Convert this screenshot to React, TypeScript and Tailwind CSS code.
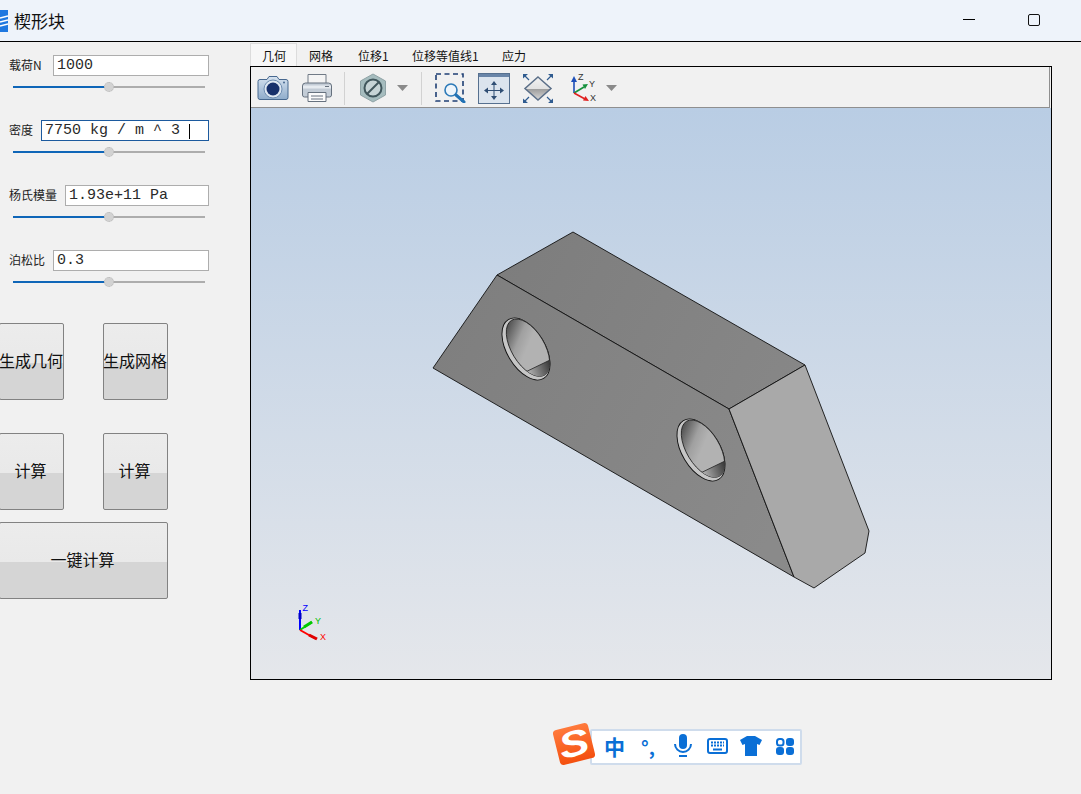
const labelFont = "font-['Noto_Sans_CJK_SC','Liberation_Sans',sans-serif]"

const fields = [
  { label: '载荷N', value: '1000', inputWidth: 'w-[156px]' },
  { label: '密度', value: '7750 kg / m ^ 3 ', inputWidth: 'w-[168px]', focused: true },
  { label: '杨氏模量', value: '1.93e+11 Pa', inputWidth: 'w-[144px]' },
  { label: '泊松比', value: '0.3', inputWidth: 'w-[156px]' },
]

const tabs = [
  { label: '几何', className: 'w-[47px] pl-[11px] bg-[#f7f7f7] border border-b-0 border-[#dcdcdc]' },
  { label: '网格', className: 'w-[49px] pl-[12px]' },
  { label: '位移1', className: 'w-[53px] pl-[12px]' },
  { label: '位移等值线1', className: 'w-[91px] pl-[13px]' },
  { label: '应力', className: 'w-[50px] pl-[12px]' },
]

function Field({ label, value, inputWidth, focused }: { label: string; value: string; inputWidth: string; focused?: boolean }) {
  return (
    <div className="mb-[27px]">
      <div className="flex h-[21px] items-center justify-between pl-[9px] pr-[41px]">
        <span className={`${labelFont} pb-[2px] text-[12px] text-[#222]`}>{label}</span>
        <div
          className={`flex h-[21px] ${inputWidth} items-center border ${focused ? 'border-[#1c5a9e]' : 'border-[#adadad]'} bg-white pl-[3px] pt-[2px] font-['Liberation_Mono',monospace] text-[15px] text-[#2a2a2a]`}
        >
          <span className="whitespace-pre">{value}</span>
          {focused && <span className="h-[15px] w-px bg-black" />}
        </div>
      </div>
      <div className="relative ml-[13px] mt-[5px] flex h-[12px] w-[192px] items-center">
        <div className="h-[2px] w-[96px] bg-[#0f66b8]" />
        <div className="h-[2px] w-[96px] bg-[#adadad]" />
        <div className="absolute left-[91px] top-[1px] h-[10px] w-[10px] rounded-full border border-dotted border-[#b8b8b8] bg-[#d2d2d2]" />
      </div>
    </div>
  )
}

function ActionButton({ label, width }: { label: string; width: string }) {
  return (
    <button
      className={`${width} ${labelFont} h-[77px] rounded-[2px] border border-[#828282] bg-[linear-gradient(#ececec_0,#e9e9e9_52%,#d5d5d5_52%,#d5d5d5_100%)] pb-[3px] pr-px text-[16px] leading-none whitespace-nowrap text-[#111]`}
    >
      <span className="-ml-px">{label}</span>
    </button>
  )
}

function CameraIcon() {
  return (
    <svg width="32" height="28" viewBox="0 0 32 28">
      <defs>
        <linearGradient id="camBody" x1="0" y1="0" x2="0" y2="1">
          <stop offset="0" stopColor="#d6e2ef" />
          <stop offset="1" stopColor="#8faccb" />
        </linearGradient>
      </defs>
      <path d="M1 7.5a2 2 0 0 1 2-2h7l2-3h8l2 3h7a2 2 0 0 1 2 2v16a2 2 0 0 1-2 2H3a2 2 0 0 1-2-2z" fill="url(#camBody)" stroke="#47688f" />
      <circle cx="16" cy="15" r="9" fill="#dfe8f2" stroke="#6f8db0" />
      <circle cx="16" cy="15" r="6.5" fill="#17306b" />
      <circle cx="27" cy="8.5" r="1" fill="#47688f" />
    </svg>
  )
}

function PrinterIcon() {
  return (
    <svg width="32" height="30" viewBox="0 0 32 30">
      <path d="M7 1.5h18v9H7z" fill="#f4f4f4" stroke="#707a86" />
      <path d="M1.5 13a3 3 0 0 1 3-3h23a3 3 0 0 1 3 3v9a2 2 0 0 1-2 2h-25a2 2 0 0 1-2-2z" fill="#c3ccd6" stroke="#66717e" />
      <path d="M2 12.5h28v3H2z" fill="#e6ebf0" />
      <path d="M7 19.5h18v9H7z" fill="#fbfbfb" stroke="#66717e" />
      <path d="M10 23h12M10 26h12" stroke="#66717e" />
      <path d="M24 13.5h4" stroke="#66717e" />
    </svg>
  )
}

function HexIcon() {
  return (
    <svg width="28" height="30" viewBox="0 0 28 30">
      <path d="M14 1l12.5 7v14L14 29 1.5 22V8z" fill="#a5bcbe" stroke="#8fa3a6" />
      <circle cx="14" cy="15" r="8.5" fill="#c6d4d6" stroke="#40565c" strokeWidth="2" />
      <path d="M8 21L20 9" stroke="#40565c" strokeWidth="2" />
    </svg>
  )
}

function Caret() {
  return (
    <svg width="11" height="6" viewBox="0 0 11 6">
      <path d="M0 0h11L5.5 6z" fill="#8a8a8a" />
    </svg>
  )
}

function ZoomBoxIcon() {
  return (
    <svg width="31" height="30" viewBox="0 0 31 30">
      <rect x="1" y="1" width="27" height="27" fill="none" stroke="#1f3f74" strokeWidth="1.6" strokeDasharray="5 3.5" />
      <circle cx="16" cy="17" r="6" fill="#eef5fb" stroke="#2d7ab8" strokeWidth="1.6" />
      <path d="M21 22l8 7" stroke="#2272b4" strokeWidth="3" strokeLinecap="round" />
    </svg>
  )
}

function FitWindowIcon() {
  return (
    <svg width="32" height="31" viewBox="0 0 32 31">
      <rect x="0.5" y="0.5" width="31" height="30" fill="#dbe4ee" stroke="#56708f" />
      <rect x="1" y="1" width="30" height="3" fill="#6985a8" />
      <path d="M16 8l3 4h-6zM16 27l3-4h-6zM6 17.500l4-3v6zM26 17.500l-4-3v6z" fill="#2f4e74" />
      <path d="M16 12v11M10 17.500h12" stroke="#2f4e74" />
    </svg>
  )
}

function DiamondIcon() {
  return (
    <svg width="32" height="31" viewBox="0 0 32 31">
      <defs>
        <linearGradient id="diamondFill" x1="0" y1="0" x2="0" y2="1">
          <stop offset="0" stopColor="#f2f2f2" />
          <stop offset="0.5" stopColor="#e2e2e2" />
          <stop offset="0.5" stopColor="#9a9a9a" />
          <stop offset="1" stopColor="#d8d8d8" />
        </linearGradient>
      </defs>
      <path d="M16 4l13 11.500L16 27 3 15.500z" fill="url(#diamondFill)" stroke="#5b6f88" strokeWidth="1.500" />
      <path d="M1 1h5L1 5.500zM31 1h-5l5 4.500zM1 30h5l-5-4.500zM31 30h-5l5-4.500z" fill="#2f5b8f" />
      <path d="M3 3l4 4M29 3l-4 4M3 28l4-4M29 28l-4-4" stroke="#2f5b8f" strokeWidth="1.200" />
    </svg>
  )
}

function AxesIcon() {
  return (
    <svg width="28" height="30" viewBox="0 0 28 30">
      <path d="M4 20V8" stroke="#1d4fb8" strokeWidth="1.600" />
      <path d="M4 3l3 6H1z" fill="#1d4fb8" />
      <path d="M4 20l10-6" stroke="#16913c" strokeWidth="1.600" />
      <path d="M18 11l-5.500 0.500 2.500 4.500z" fill="#16913c" />
      <path d="M4 20l11 6" stroke="#e02020" strokeWidth="1.600" />
      <path d="M19 28l-6-0.500 2.500-4.500z" fill="#e02020" />
      <text x="8" y="7" fontSize="9" fontFamily="Liberation Sans" fill="#333">Z</text>
      <text x="19" y="14" fontSize="9" fontFamily="Liberation Sans" fill="#333">Y</text>
      <text x="20" y="28" fontSize="9" fontFamily="Liberation Sans" fill="#333">X</text>
    </svg>
  )
}

function Hole({ dx, dy, id }: { dx: number; dy: number; id: string }) {
  return (
    <g transform={`translate(${dx} ${dy})`}>
      <clipPath id={id}>
        <ellipse cx="528" cy="347.700" rx="16.500" ry="32" transform="rotate(-31 528 347.700)" />
      </clipPath>
      <ellipse cx="526" cy="349" rx="19" ry="34.300" transform="rotate(-31 526 349)" fill="#c6c6c6" stroke="#111" strokeWidth="0.900" />
      <ellipse cx="528" cy="347.700" rx="16.500" ry="32" transform="rotate(-31 528 347.700)" fill="url(#boreFill)" stroke="#222" strokeWidth="0.800" />
      <g clipPath={`url(#${id})`}>
        <path d="M526.500 371.500L551 359.500V385H520z" fill="url(#boreLow)" />
        <path d="M526.500 371.500L551 359.500" stroke="#222" strokeWidth="0.800" fill="none" />
      </g>
    </g>
  )
}

function Model() {
  return (
    <svg className="block h-[571px] w-[800px]" viewBox="251 108 800 571">
      <defs>
        <linearGradient id="topFace" gradientUnits="userSpaceOnUse" x1="500" y1="250" x2="800" y2="400">
          <stop offset="0" stopColor="#7d7d7d" />
          <stop offset="1" stopColor="#878787" />
        </linearGradient>
        <linearGradient id="frontFace" gradientUnits="userSpaceOnUse" x1="440" y1="340" x2="780" y2="520">
          <stop offset="0" stopColor="#7f7f7f" />
          <stop offset="1" stopColor="#8a8a8a" />
        </linearGradient>
        <linearGradient id="boreFill" gradientUnits="userSpaceOnUse" x1="512" y1="325" x2="528" y2="347">
          <stop offset="0" stopColor="#505050" />
          <stop offset="0.6" stopColor="#a0a0a0" />
          <stop offset="1" stopColor="#b2b2b2" />
        </linearGradient>
        <linearGradient id="boreLow" gradientUnits="userSpaceOnUse" x1="530" y1="372" x2="550" y2="365">
          <stop offset="0" stopColor="#a8a8a8" />
          <stop offset="1" stopColor="#3c3c3c" />
        </linearGradient>
      </defs>
      <g stroke="#111" strokeWidth="0.900" strokeLinejoin="round">
        <path d="M497 275L573 232L805 365L729 409Z" fill="url(#topFace)" />
        <path d="M497 275L729 409L794 577L433 368Z" fill="url(#frontFace)" />
        <path d="M805 365L869 531L865 553L814 588L794 577L729 409Z" fill="#a9a9a9" />
      </g>
      <Hole dx={0} dy={0} id="holeA" />
      <Hole dx={175} dy={101} id="holeB" />
      <path d="M300 630V610" stroke="#0000ff" strokeWidth="2" />
      <path d="M300 619V613" stroke="#0000c8" strokeWidth="3" />
      <path d="M300 630L312 622" stroke="#00d000" strokeWidth="2" />
      <path d="M304 627L312 622" stroke="#00c800" strokeWidth="3" />
      <path d="M300 630L316 639" stroke="#ff0000" strokeWidth="2" />
      <path d="M309 635L317 639" stroke="#e00000" strokeWidth="3" />
      <text x="302.500" y="611" fontSize="9" fontFamily="Liberation Sans" fill="#0000ff">Z</text>
      <text x="315" y="624" fontSize="9" fontFamily="Liberation Sans" fill="#00c000">Y</text>
      <text x="320" y="640" fontSize="9" fontFamily="Liberation Sans" fill="#ff0000">X</text>
    </svg>
  )
}

function ImeBar() {
  return (
    <div className="absolute left-[552px] top-[723px] flex h-[43px] w-[250px] items-center">
      <div className="absolute left-[38px] top-[6px] flex h-[36px] w-[212px] items-center rounded-[2px] border-2 border-[#cfdcec] bg-white pb-[2px] pl-[12px] text-[#0a6fd6]">
        <span className={`${labelFont} text-[21px] font-bold leading-none`}>中</span>
        <span className={`${labelFont} ml-[16px] w-[22px] text-[19px] font-bold leading-none`}>°,</span>
        <svg className="ml-[11px]" width="18" height="24" viewBox="0 0 18 24">
          <rect x="5" y="0" width="8" height="15" rx="4" fill="#0a6fd6" />
          <path d="M1 10a8 8 0 0 0 16 0" fill="none" stroke="#0a6fd6" strokeWidth="2" />
          <path d="M5 22h8" stroke="#0a6fd6" strokeWidth="2" />
        </svg>
        <svg className="ml-[15px]" width="21" height="16" viewBox="0 0 21 16">
          <rect x="1" y="1" width="19" height="14" rx="2" fill="none" stroke="#0a6fd6" strokeWidth="2" />
          <path d="M4 4.500h13M4 7.500h13" stroke="#0a6fd6" strokeWidth="2" strokeDasharray="2 1" />
          <path d="M6 11.500h9" stroke="#0a6fd6" strokeWidth="2" />
        </svg>
        <svg className="ml-[12px]" width="22" height="20" viewBox="0 0 22 20">
          <path d="M7 0h8l7 4-2.500 5L17 8v12H5V8L2.500 9 0 4z" fill="#0a6fd6" />
        </svg>
        <svg className="ml-[14px]" width="18" height="17" viewBox="0 0 18 17">
          <rect x="1" y="1" width="6.500" height="6.500" rx="2.500" fill="none" stroke="#0a6fd6" strokeWidth="2" />
          <rect x="10" y="0" width="8" height="8" rx="3" fill="#0a6fd6" />
          <rect x="0" y="9" width="8" height="8" rx="3" fill="#0a6fd6" />
          <rect x="10" y="9" width="8" height="8" rx="3" fill="#0a6fd6" />
        </svg>
      </div>
      <div className="absolute left-[4px] top-[3px] flex h-[36px] w-[36px] -rotate-[14deg] items-center justify-center rounded-[4px] bg-[linear-gradient(#ff7a3c,#f4500f)]">
        <span className="scale-x-125 font-['Liberation_Sans',sans-serif] text-[36px] font-bold italic leading-none text-white">S</span>
      </div>
    </div>
  )
}

export default function App() {
  return (
    <div className="relative flex h-[794px] w-[1081px] flex-col overflow-hidden bg-[#f1f1f1]">
      <header className="flex h-[42px] shrink-0 items-center border-b border-black bg-[#eef3fa]">
        <svg width="8" height="22" viewBox="0 0 8 22">
          <rect width="8" height="22" fill="#1f78e0" />
          <path d="M0 8l8-2M0 12l8-2M0 16l8-2" stroke="#fff" strokeWidth="1.500" />
        </svg>
        <span className={`${labelFont} ml-[6px] text-[17px] text-[#111]`}>楔形块</span>
        <div className="ml-auto mr-[41px] flex items-center gap-[53px] pb-[2px]">
          <div className="h-px w-[12px] bg-black" />
          <div className="h-[12px] w-[12px] rounded-[2px] border border-[#111]" />
        </div>
      </header>

      <div className="flex flex-1">
        <aside className="w-[250px] shrink-0 pt-[13px]">
          {fields.map((f) => (
            <Field key={f.label} {...f} />
          ))}
          <div className="-ml-px mt-[35px] flex flex-col">
            <div className="flex gap-[39px]">
              <ActionButton label="生成几何" width="w-[65px]" />
              <ActionButton label="生成网格" width="w-[65px]" />
            </div>
            <div className="mt-[33px] flex gap-[39px]">
              <ActionButton label="计算" width="w-[65px]" />
              <ActionButton label="计算" width="w-[65px]" />
            </div>
            <div className="mt-[12px]">
              <ActionButton label="一键计算" width="w-[169px]" />
            </div>
          </div>
        </aside>

        <main className="w-[802px] pt-px">
          <nav className={`${labelFont} flex h-[23px] text-[12px] text-[#111]`}>
            {tabs.map((t) => (
              <div key={t.label} className={`flex h-[23px] items-center pt-[2px] ${t.className}`}>
                {t.label}
              </div>
            ))}
          </nav>
          <div className="h-[614px] w-[802px] border border-black">
            <div className="flex h-[41px] w-[799px] items-center border-b border-r border-[#8f8f8f] bg-[#f1f1f1] pl-[6px] pt-[2px]">
              <CameraIcon />
              <div className="ml-[12px]"><PrinterIcon /></div>
              <div className="ml-[11px] h-[33px] w-px bg-[#d2d2d2]" />
              <div className="ml-[14px]"><HexIcon /></div>
              <div className="ml-[10px]"><Caret /></div>
              <div className="ml-[13px] h-[33px] w-px bg-[#d2d2d2]" />
              <div className="ml-[13px]"><ZoomBoxIcon /></div>
              <div className="ml-[12px]"><FitWindowIcon /></div>
              <div className="ml-[12px]"><DiamondIcon /></div>
              <div className="ml-[16px]"><AxesIcon /></div>
              <div className="ml-[8px]"><Caret /></div>
            </div>
            <div className="h-[571px] w-[800px] bg-[linear-gradient(#b9cde4,#e5e7eb)]">
              <Model />
            </div>
          </div>
        </main>
      </div>

      <ImeBar />
    </div>
  )
}
